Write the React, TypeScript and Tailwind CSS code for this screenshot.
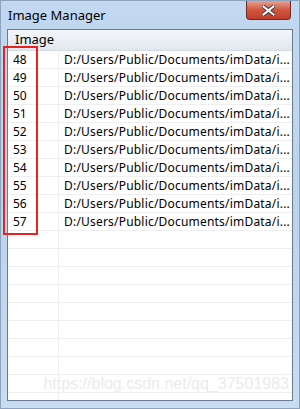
import React from "react";

const ids = [48, 49, 50, 51, 52, 53, 54, 55, 56, 57];
const emptyRows = Array.from({ length: 12 });

export default function App() {
  return (
    <div
      className="relative w-[300px] h-[409px] flex flex-col overflow-hidden bg-gradient-to-b from-[#c2d8f0] via-[#bcd3ec] to-[#c8dcf2] border border-[#8da2bd]"
      style={{ fontFamily: '"Microsoft YaHei", "Noto Sans", "Liberation Sans", sans-serif' }}
    >
      {/* title bar */}
      <div className="relative h-[28px] flex items-center shrink-0">
        <span className="pl-[7px] pt-[2px] text-[13px] text-black">Image Manager</span>
        <div className="absolute right-[8px] top-0 w-[45px] h-[19px] rounded-b-[4px] border border-t-0 border-[#6b2a24] bg-gradient-to-b from-[#e6a193] via-[#d0553f] to-[#c03d29] flex items-center justify-center">
          <svg width="13" height="11" viewBox="0 0 13 11">
            <path d="M1.5 1.5 L11.5 9.5 M11.5 1.5 L1.5 9.5" stroke="#3a3a3a" strokeWidth="4" strokeLinecap="square" />
            <path d="M1.5 1.5 L11.5 9.5 M11.5 1.5 L1.5 9.5" stroke="#ffffff" strokeWidth="2" strokeLinecap="square" />
          </svg>
        </div>
      </div>

      {/* client area */}
      <div className="flex-1 mx-[6px] mb-[7px] border border-[#6b7b8f] bg-white overflow-hidden flex flex-col">
        <div className="h-[21px] shrink-0 flex items-center bg-gradient-to-b from-[#f4f6fa] to-[#e2e7ef] border-b border-[#d5dbe4] text-[13px] text-black">
          <span className="pl-[7px]">Image</span>
        </div>
        {ids.map((id) => (
          <div key={id} className="h-[18px] shrink-0 flex border-b border-[#efefef] text-[12px] text-black leading-[17px]">
            <div className="w-[51px] shrink-0 border-r border-[#efefef] pl-[5px]">{id}</div>
            <div className="pl-[5px] whitespace-nowrap tracking-[0.2px]">D:/Users/Public/Documents/imData/i...</div>
          </div>
        ))}
        {emptyRows.map((_, i) => (
          <div key={i} className="h-[18px] shrink-0 flex border-b border-[#efefef]">
            <div className="w-[51px] shrink-0 border-r border-[#efefef]" />
          </div>
        ))}
      </div>

      {/* highlight box */}
      <div className="absolute left-[2px] top-[45px] w-[35px] h-[189px] border-2 border-[#e8231e]" />

      {/* watermark */}
      <div
        className="absolute right-[10px] bottom-[12px] text-[16px] text-[#ebebeb] whitespace-nowrap"
        style={{ fontFamily: '"Liberation Sans", Arial, sans-serif' }}
      >
        https://blog.csdn.net/qq_37501983
      </div>
    </div>
  );
}
